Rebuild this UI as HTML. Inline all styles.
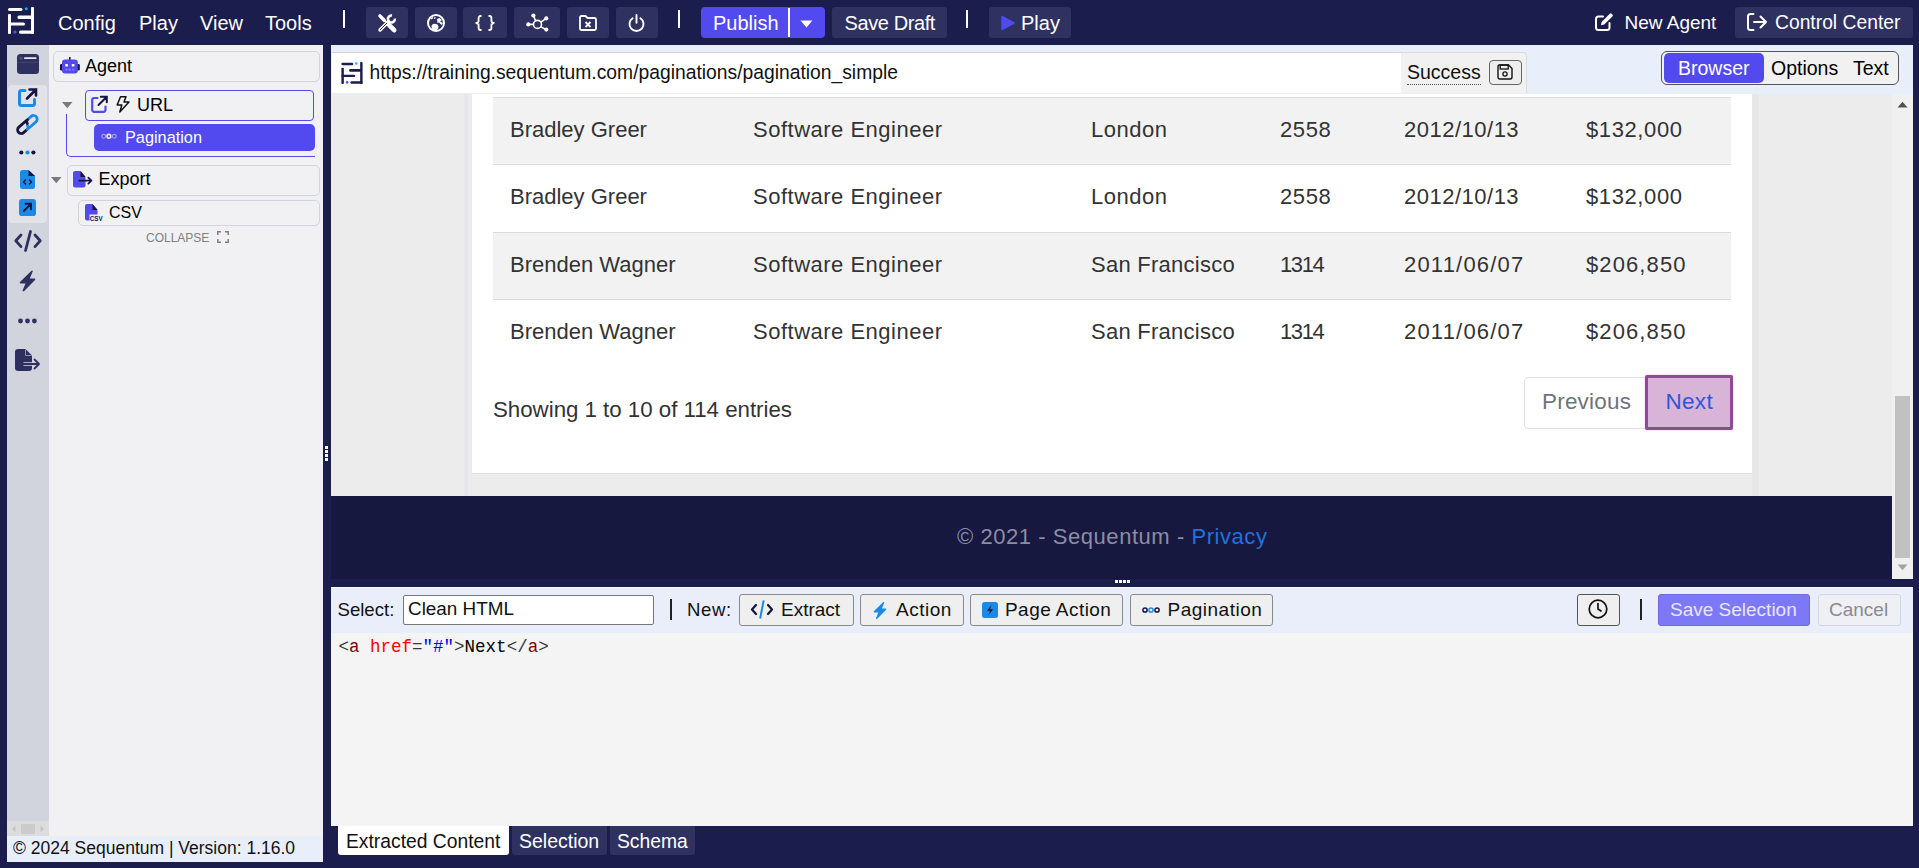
<!DOCTYPE html>
<html><head><meta charset="utf-8">
<style>
*{box-sizing:border-box;margin:0;padding:0}
html,body{width:1919px;height:868px;overflow:hidden}
body{background:#1b1d4c;font-family:"Liberation Sans",sans-serif;position:relative;color:#000}
.a{position:absolute}
.t{position:absolute;line-height:1;white-space:nowrap}
.w{color:#fff}
.tb{position:absolute;background:#2f3260;border-radius:3px;top:7px;height:31px}
.sep{position:absolute;background:#fff;width:2px;top:10px;height:18px}
svg{position:absolute;overflow:visible}
</style></head><body>

<!-- ===== TOP BAR ===== -->
<svg style="left:8px;top:7px" width="26" height="27" viewBox="0 0 26 27">
 <g fill="#fff">
  <rect x="0" y="1" width="14.5" height="3" rx="1.5"/>
  <rect x="23" y="0" width="3" height="27" rx="1"/>
  <rect x="0" y="7" width="3" height="20" rx="1"/>
  <rect x="9.5" y="8.5" width="15" height="3.5" rx="1.5"/>
  <rect x="0" y="15.5" width="17" height="3" rx="1.5"/>
  <rect x="11" y="23.5" width="15" height="3.3" rx="1.5"/>
 </g>
 <circle cx="18.3" cy="1.8" r="1.5" fill="#1ea7fd"/>
 <circle cx="7" cy="25" r="1.6" fill="#5b50ff"/>
</svg>
<div class="t w" style="left:58px;top:13px;font-size:20px">Config</div>
<div class="t w" style="left:139px;top:13px;font-size:20px">Play</div>
<div class="t w" style="left:200px;top:13px;font-size:20px">View</div>
<div class="t w" style="left:265px;top:13px;font-size:20px">Tools</div>
<div class="sep" style="left:343px"></div>

<div class="tb" style="left:366px;width:42px"></div>
<div class="tb" style="left:415px;width:42px"></div>
<div class="tb" style="left:463px;width:44px"></div>
<div class="tb" style="left:514px;width:46px"></div>
<div class="tb" style="left:567px;width:42px"></div>
<div class="tb" style="left:616px;width:42px"></div>

<div class="sep" style="left:678px"></div>

<div class="a" style="left:701px;top:7px;width:124px;height:31px;background:#5249ef;border-radius:4px"></div>
<div class="a" style="left:788px;top:8px;width:1.5px;height:29px;background:#fff"></div>
<div class="t w" style="left:713px;top:13px;font-size:20px">Publish</div>
<svg style="left:800px;top:19.5px" width="13" height="8" viewBox="0 0 13 8"><path d="M0.5 0.5 H12.5 L6.5 7.5 Z" fill="#fff"/></svg>

<div class="tb" style="left:832px;width:115px"></div>
<div class="t w" style="left:844.5px;top:13px;font-size:20px;letter-spacing:-0.4px">Save Draft</div>
<div class="sep" style="left:966px"></div>
<div class="tb" style="left:989px;width:82px"></div>
<svg style="left:1001px;top:14.5px" width="14" height="16" viewBox="0 0 14 16"><path d="M1 1.5 L13 8 L1 14.5 Z" fill="#5249ef" stroke="#5249ef" stroke-linejoin="round" stroke-width="1.5"/></svg>
<div class="t w" style="left:1021px;top:13px;font-size:20px">Play</div>


<div class="tb" style="left:1735px;width:178px"></div>
<!-- toolbar icons -->
<svg style="left:378px;top:14px" width="19" height="18" viewBox="0 0 19 18">
 <g stroke="#fff" fill="none" stroke-linecap="round">
  <path d="M1.9 1.9 L6.2 6.2" stroke-width="3.4"/>
  <path d="M6 6 L10 10" stroke-width="1.6"/>
  <path d="M11.2 11.2 L16.2 16.2" stroke-width="4.6"/>
  <path d="M2 16 L10.5 7.5" stroke-width="3.4"/>
  <path d="M16.9 4.7 A3.5 3.5 0 1 1 14 1.5" stroke-width="2.6" stroke-linecap="butt"/>
 </g>
 <path d="M2.2 15.8 L8.8 9.2" stroke="#2f3260" stroke-width="1" stroke-linecap="round"/>
</svg>
<svg style="left:427px;top:14px" width="18" height="18" viewBox="0 0 18 18">
 <circle cx="9" cy="9" r="8" fill="none" stroke="#fff" stroke-width="2"/>
 <path d="M4.5 12.5 C4.5 9.5 8 9 10.5 10.5 C12.5 12 11 16 9 16.5 C6.5 16.5 4.5 15 4.5 12.5 Z" fill="#fff"/>
 <path d="M10 5 L12.5 4 L15 6 L13 7.5 L16 9 L14.5 11 L12 8.5 L10.5 9 Z" fill="#fff"/>
 <path d="M4 5 L6 3.5 M7 4.5 L8.5 3.5" stroke="#fff" stroke-width="1.2"/>
</svg>
<svg style="left:475px;top:15px" width="20" height="16" viewBox="0 0 20 16">
 <path d="M6.5 1 H5.5 Q3.6 1 3.6 3 V5.8 Q3.6 7.8 1.2 8 Q3.6 8.2 3.6 10.2 V13 Q3.6 15 5.5 15 H6.5" fill="none" stroke="#fff" stroke-width="1.8" stroke-linejoin="round"/>
 <path d="M13.5 1 H14.5 Q16.4 1 16.4 3 V5.8 Q16.4 7.8 18.8 8 Q16.4 8.2 16.4 10.2 V13 Q16.4 15 14.5 15 H13.5" fill="none" stroke="#fff" stroke-width="1.8" stroke-linejoin="round"/>
</svg>
<svg style="left:526px;top:13px" width="22" height="20" viewBox="0 0 22 20">
 <g stroke="#fff" stroke-width="1.6" fill="none">
  <circle cx="11.5" cy="11.4" r="4"/>
  <path d="M7.5 11.4 H3 M9.6 7.8 L7.4 2.5 M14.8 9.2 L20.3 5.3 M14.6 13.8 L20.3 16.6"/>
 </g>
 <g fill="#fff"><circle cx="2.3" cy="11.4" r="2.1"/><circle cx="7.4" cy="2.5" r="2.1"/><circle cx="20.3" cy="5.3" r="2.1"/><circle cx="20.3" cy="16.6" r="2.1"/></g>
</svg>
<svg style="left:579px;top:15px" width="18" height="16" viewBox="0 0 18 16">
 <path d="M2.5 1 H6.5 L8.5 3 H15.5 Q17 3 17 4.5 V13.5 Q17 15 15.5 15 H2.5 Q1 15 1 13.5 V2.5 Q1 1 2.5 1 Z" fill="none" stroke="#fff" stroke-width="1.8" stroke-linejoin="round"/>
 <path d="M6.5 7 L11.5 12 M11.5 7 L6.5 12" stroke="#fff" stroke-width="1.8"/>
</svg>
<svg style="left:628px;top:13.5px" width="17" height="18" viewBox="0 0 17 18">
 <path d="M4.6 4.2 A7 7 0 1 0 12.4 4.2" fill="none" stroke="#fff" stroke-width="1.9" stroke-linecap="round"/>
 <path d="M8.5 1 V8.8" stroke="#fff" stroke-width="1.9" stroke-linecap="round"/>
</svg>
<!-- new agent -->
<svg style="left:1595px;top:12px" width="19" height="19" viewBox="0 0 19 19">
 <path d="M8 4.5 H3.5 Q1 4.5 1 7 V15.5 Q1 18 3.5 18 H12 Q14.5 18 14.5 15.5 V11" fill="none" stroke="#fff" stroke-width="2" stroke-linecap="round"/>
 <path d="M6 13.2 L6.6 10 L14.8 1.8 Q15.8 0.8 16.8 1.8 L17.4 2.4 Q18.4 3.4 17.4 4.4 L9.2 12.6 Z" fill="#fff"/>
</svg>
<svg style="left:1747px;top:13px" width="21" height="18" viewBox="0 0 21 18">
 <path d="M6.5 1 H3.5 Q1 1 1 3.5 V14.5 Q1 17 3.5 17 H6.5" fill="none" stroke="#fff" stroke-width="2" stroke-linecap="round"/>
 <path d="M7 9 H19 M13.5 3.5 L19 9 L13.5 14.5" fill="none" stroke="#fff" stroke-width="2" stroke-linecap="round" stroke-linejoin="round"/>
</svg>

<div class="t w" style="left:1624.5px;top:13px;font-size:19px">New Agent</div>
<div class="t w" style="left:1775px;top:13px;font-size:19.3px">Control Center</div>

<!-- ===== LEFT PANEL ===== -->
<div class="a" style="left:7px;top:45px;width:42px;height:776px;background:#d1d3dd"></div>
<div class="a" style="left:8px;top:85px;width:39px;height:138px;background:#e2e3e9;border-radius:4px"></div>
<div class="a" style="left:7px;top:821px;width:42px;height:15px;background:#dcdcdc"></div>
<div class="a" style="left:21px;top:824px;width:14px;height:10px;background:#cbcbcb"></div>
<svg style="left:11px;top:825px" width="5" height="8" viewBox="0 0 5 8"><path d="M4.5 0.5 V7.5 L0.8 4 Z" fill="#c4c4c4"/></svg>
<svg style="left:40px;top:825px" width="5" height="8" viewBox="0 0 5 8"><path d="M0.5 0.5 V7.5 L4.2 4 Z" fill="#c4c4c4"/></svg>
<div class="a" style="left:49px;top:45px;width:274px;height:791px;background:#f1f1f4"></div>
<div class="a" style="left:7px;top:836px;width:316px;height:26px;background:#e9effa"></div>
<div class="t" style="left:13px;top:839.5px;font-size:17.5px;color:#111">© 2024 Sequentum | Version: 1.16.0</div>

<!-- tree -->
<div class="a" style="left:53px;top:51px;width:266.5px;height:30.5px;border:1px solid #d3d5de;border-radius:5px"></div>
<div class="t" style="left:85px;top:57px;font-size:18px">Agent</div>
<div class="a" style="left:84.5px;top:90px;width:229.5px;height:30.5px;border:1.5px solid #5249ef;border-radius:4px"></div>
<div class="t" style="left:137px;top:95.5px;font-size:18px">URL</div>
<div class="a" style="left:66px;top:114px;width:249px;height:42.5px;border-left:1.5px solid #5249ef;border-bottom:1.5px solid #5249ef;border-bottom-left-radius:5px"></div>
<div class="a" style="left:94px;top:124px;width:221px;height:27px;background:#5249ef;border-radius:5px"></div>
<div class="t w" style="left:125px;top:129px;font-size:16.3px">Pagination</div>
<div class="a" style="left:66.5px;top:164.5px;width:253px;height:31px;border:1px solid #d3d5de;border-radius:5px"></div>
<div class="t" style="left:98.5px;top:169.5px;font-size:18px">Export</div>
<div class="a" style="left:77.5px;top:200px;width:242px;height:25.5px;border:1px solid #d3d5de;border-radius:5px"></div>
<div class="t" style="left:109px;top:204.5px;font-size:16px">CSV</div>
<div class="t" style="left:146px;top:231.5px;font-size:12px;color:#808080">COLLAPSE</div>


<!-- sidebar icons -->
<svg style="left:17px;top:54px" width="22" height="20" viewBox="0 0 22 20">
 <rect x="0" y="0" width="22" height="20" rx="3.5" fill="#2e3160"/>
 <path d="M0.5 8.3 H21.5" stroke="#4a4d78" stroke-width="0.8"/>
 <rect x="7" y="3.3" width="12.5" height="1.8" rx="0.9" fill="#e6e7ee"/>
 <circle cx="4" cy="4.2" r="1.2" fill="none" stroke="#6b6e90" stroke-width="0.6"/>
</svg>
<svg style="left:17px;top:88px" width="21" height="20" viewBox="0 0 21 20">
 <path d="M8 2.5 H4.5 Q2.5 2.5 2.5 4.5 V15.5 Q2.5 17.5 4.5 17.5 H15.5 Q17.5 17.5 17.5 15.5 V11.5" fill="none" stroke="#1b8ae6" stroke-width="3" stroke-linecap="round"/>
 <path d="M10 10.5 L19 1.5 M12.5 1.5 H19 V7.5" fill="none" stroke="#15153f" stroke-width="2.6" stroke-linecap="round" stroke-linejoin="miter"/>
</svg>
<svg style="left:16px;top:115px" width="23" height="19" viewBox="0 0 23 19">
 <g transform="translate(11.4,9.5) rotate(-41)" fill="none" stroke-width="2.8" stroke-linecap="round">
  <path d="M1.5 -3.6 H-8.2 A3.6 3.6 0 0 0 -8.2 3.6 H-3.5" stroke="#15153f"/>
  <path d="M-1.5 3.6 H8.2 A3.6 3.6 0 0 0 8.2 -3.6 H3.5" stroke="#1b8ae6"/>
  <path d="M-3.2 3.6 Q-1 3.6 -0.6 0.8" stroke="#1b8ae6"/>
  <path d="M3.2 -3.6 Q1 -3.6 0.6 -0.8" stroke="#15153f"/>
 </g>
</svg>
<svg style="left:19px;top:150px" width="17" height="5" viewBox="0 0 17 5">
 <circle cx="2.3" cy="2.5" r="2.1" fill="#15153f"/><circle cx="8.5" cy="2.5" r="2.1" fill="#1b8ae6"/><circle cx="14.4" cy="2.5" r="2.1" fill="#15153f"/>
</svg>
<svg style="left:20px;top:170px" width="15" height="19" viewBox="0 0 15 19">
 <path d="M2.5 0 H8.5 L15 6 V16.5 Q15 19 12.5 19 H2.5 Q0 19 0 16.5 V2.5 Q0 0 2.5 0 Z" fill="#1b8ae6"/>
 <path d="M8.5 0 L15 6 H8.5 Z" fill="#15153f"/>
 <path d="M5.5 10 L3.5 12 L5.5 14 M9.5 10 L11.5 12 L9.5 14" fill="none" stroke="#15153f" stroke-width="1.5" stroke-linecap="round" stroke-linejoin="round"/>
</svg>
<svg style="left:19px;top:199px" width="17" height="17" viewBox="0 0 17 17">
 <rect x="0" y="0" width="17" height="17" rx="2.8" fill="#1b8ae6"/>
 <path d="M4.8 12 L12 4.8 M6.5 4.8 H12 V10.3" fill="none" stroke="#15153f" stroke-width="1.9" stroke-linecap="round"/>
</svg>
<svg style="left:14px;top:230px" width="28" height="22" viewBox="0 0 28 22">
 <path d="M7 5 L1.8 10.8 L7 16.6 M21 5 L26.2 10.8 L21 16.6 M16.5 1.5 L11.5 20.5" fill="none" stroke="#2e3160" stroke-width="2.8" stroke-linecap="round" stroke-linejoin="round"/>
</svg>
<svg style="left:19px;top:270px" width="17" height="22" viewBox="0 0 17 22">
 <path d="M12.5 0.8 Q13.5 0.2 13.8 1.2 L10.8 8.5 H15.5 Q17 8.7 16 10 L5.2 21 Q4 21.8 3.5 20.8 L6.5 13.5 H1.5 Q0 13.2 1 12 Z" fill="#2e3160"/>
</svg>
<svg style="left:18px;top:318px" width="19" height="6" viewBox="0 0 19 6">
 <circle cx="2.5" cy="3" r="2.4" fill="#2e3160"/><circle cx="9.5" cy="3" r="2.4" fill="#2e3160"/><circle cx="16.4" cy="3" r="2.4" fill="#2e3160"/>
</svg>
<svg style="left:15px;top:349px" width="26" height="22" viewBox="0 0 26 22">
 <path d="M3 0 H10.5 L17 6.5 V19 Q17 22 14 22 H3 Q0 22 0 19 V3 Q0 0 3 0 Z" fill="#2e3160"/>
 <path d="M10.5 0.5 V6.5 H16.5" fill="none" stroke="#d1d3dd" stroke-width="0.6"/>
 <path d="M8.5 15 H23.5" stroke="#d1d3dd" stroke-width="3.6"/>
 <path d="M8.5 15 H23.5 M19.5 10.5 L24 15 L19.5 19.5" fill="none" stroke="#2e3160" stroke-width="1.8" stroke-linecap="round" stroke-linejoin="round"/>
</svg>

<!-- tree icons -->
<svg style="left:60px;top:57px" width="20" height="17" viewBox="0 0 20 17">
 <rect x="9" y="0" width="1.6" height="3" fill="#15153f"/>
 <rect x="0" y="7" width="3" height="6.5" rx="1.3" fill="#15153f"/>
 <rect x="16.8" y="7" width="3" height="6.5" rx="1.3" fill="#15153f"/>
 <rect x="2" y="2.5" width="15.8" height="14" rx="3" fill="#5249ef"/>
 <rect x="5.3" y="7" width="2.6" height="2.6" rx="0.6" fill="#fff"/>
 <rect x="11.8" y="7" width="2.6" height="2.6" rx="0.6" fill="#fff"/>
 <rect x="5.5" y="11.8" width="2" height="1.8" fill="#8a84f3"/><rect x="8.9" y="11.8" width="2" height="1.8" fill="#8a84f3"/><rect x="12.3" y="11.8" width="2" height="1.8" fill="#8a84f3"/>
</svg>
<svg style="left:62px;top:102px" width="11" height="7" viewBox="0 0 11 7"><path d="M0 0 H10.5 L5.25 6.3 Z" fill="#7a7a7a"/></svg>
<svg style="left:91px;top:96px" width="17" height="17" viewBox="0 0 17 17">
 <path d="M6.5 2 H3.2 Q1.2 2 1.2 4 V13.8 Q1.2 15.8 3.2 15.8 H12.5 Q14.5 15.8 14.5 13.8 V10.5" fill="none" stroke="#5249ef" stroke-width="2.2" stroke-linecap="round"/>
 <path d="M7.5 9 L15.8 0.8 M9.8 0.8 H15.8 V6.2" fill="none" stroke="#15153f" stroke-width="2" stroke-linecap="round"/>
</svg>
<svg style="left:116px;top:96px" width="14" height="17" viewBox="0 0 14 17">
 <path d="M4.5 0.8 H10 L8 6 H13 L3.8 16 L5.8 9 H1.2 Z" fill="none" stroke="#111" stroke-width="1.5" stroke-linejoin="round"/>
</svg>
<svg style="left:101px;top:133px" width="16" height="7" viewBox="0 0 16 7">
 <circle cx="2.7" cy="3.3" r="1.9" fill="none" stroke="#a9a4f7" stroke-width="1.1"/>
 <circle cx="7.9" cy="3.3" r="1.9" fill="none" stroke="#e8e6ff" stroke-width="1.6"/>
 <circle cx="13.3" cy="3.3" r="1.9" fill="none" stroke="#a9a4f7" stroke-width="1.1"/>
</svg>
<svg style="left:51px;top:177px" width="11" height="7" viewBox="0 0 11 7"><path d="M0 0 H10.5 L5.25 6.3 Z" fill="#7a7a7a"/></svg>
<svg style="left:73px;top:171px" width="20" height="17" viewBox="0 0 20 17">
 <path d="M2 0 H7.5 L12.5 6 V14.5 Q12.5 16.5 10.5 16.5 H2 Q0 16.5 0 14.5 V2 Q0 0 2 0 Z" fill="#5249ef"/>
 <path d="M7.5 0 L12.5 6 H7.5 Z" fill="#15153f"/>
 <path d="M6.5 9.6 H18.5 M15.3 6.6 L18.5 9.6 L15.3 12.6" fill="none" stroke="#15153f" stroke-width="1.7" stroke-linecap="round" stroke-linejoin="round"/>
</svg>
<svg style="left:85px;top:204px" width="18" height="17" viewBox="0 0 18 17">
 <path d="M2 0 H7.5 L12.5 6 V14.5 Q12.5 16.5 10.5 16.5 H2 Q0 16.5 0 14.5 V2 Q0 0 2 0 Z" fill="#5249ef"/>
 <path d="M7.5 0 L12.5 6 H7.5 Z" fill="#15153f"/>
 <rect x="4.5" y="10.5" width="13.5" height="6.5" fill="#f1f1f4"/>
 <text x="4.8" y="16.6" font-family="Liberation Sans" font-weight="bold" font-size="7.2" fill="#15153f" textLength="12.8" lengthAdjust="spacingAndGlyphs">CSV</text>
</svg>
<svg style="left:217px;top:231px" width="12" height="12" viewBox="0 0 12 12">
 <path d="M0.8 4 V0.8 H4 M8 0.8 H11.2 V4 M11.2 8 V11.2 H8 M4 11.2 H0.8 V8" fill="none" stroke="#808080" stroke-width="1.5"/>
</svg>

<!-- ===== BROWSER PANEL ===== -->
<div class="a" style="left:331px;top:45px;width:1582px;height:49px;background:#e8eefa"></div>
<div class="a" style="left:332px;top:52px;width:1069px;height:41px;background:#fff;border-top:1px solid #cfd3da"></div>
<div class="a" style="left:1401px;top:52px;width:126px;height:41px;background:#f1f1f1;border-top:1px solid #dcdcdc;border-right:1px solid #dcdcdc;border-top-right-radius:4px"></div>
<div class="t" style="left:369.5px;top:63px;font-size:19.3px;color:#111">https://training.sequentum.com/paginations/pagination_simple</div>
<div class="t" style="left:1407px;top:62.5px;font-size:19.5px;color:#111">Success</div>
<div class="a" style="left:1407px;top:84px;width:74px;border-top:1px dotted #555"></div>
<div class="a" style="left:1489px;top:60px;width:33px;height:25px;border:1px solid #666;border-radius:4px;background:#eee"></div>


<svg style="left:341px;top:62px" width="22" height="22" viewBox="0 0 26 27">
 <g fill="#1b1d4c">
  <rect x="0" y="1" width="14.5" height="3" rx="1.5"/>
  <rect x="23" y="0" width="3" height="27" rx="1"/>
  <rect x="0" y="7" width="3" height="20" rx="1"/>
  <rect x="9.5" y="8.5" width="15" height="3.5" rx="1.5"/>
  <rect x="0" y="15.5" width="17" height="3" rx="1.5"/>
  <rect x="11" y="23.5" width="15" height="3.3" rx="1.5"/>
 </g>
 <circle cx="18.3" cy="1.8" r="1.5" fill="#1ea7fd"/>
 <circle cx="7" cy="25" r="1.6" fill="#5b50ff"/>
</svg>
<svg style="left:1497px;top:64px" width="16" height="16" viewBox="0 0 16 16">
 <path d="M2.3 1 H11.5 L15 4.5 V13 Q15 15 13 15 H3 Q1 15 1 13 V3 Q1 1 2.3 1 Z" fill="none" stroke="#111" stroke-width="1.4"/>
 <rect x="3.2" y="1" width="8" height="4" fill="none" stroke="#111" stroke-width="1.3"/>
 <circle cx="8" cy="10" r="2.1" fill="none" stroke="#111" stroke-width="1.3"/>
</svg>

<div class="a" style="left:1661px;top:51px;width:238px;height:34px;border:1px solid #555;border-radius:6px;background:#f1f1f1"></div>
<div class="a" style="left:1664px;top:53px;width:100px;height:30px;background:#5249ef;border-radius:5px"></div>
<div class="t w" style="left:1678px;top:58.5px;font-size:19.5px">Browser</div>
<div class="t" style="left:1771px;top:58.5px;font-size:19.5px">Options</div>
<div class="t" style="left:1853px;top:58.5px;font-size:19.5px">Text</div>

<!-- content -->
<div class="a" style="left:331px;top:94px;width:1561px;height:402px;background:#ececec"></div>
<div class="a" style="left:472px;top:94px;width:1280px;height:380px;background:#fff;border-bottom:1px solid #dedede"></div>
<div class="a" style="left:493px;top:96.5px;width:1238px;height:68.5px;background:#f2f2f2;border-top:1px solid #dcdcdc;border-bottom:1px solid #dcdcdc"></div>
<div class="a" style="left:493px;top:232px;width:1238px;height:68px;background:#f2f2f2;border-top:1px solid #dcdcdc;border-bottom:1px solid #dcdcdc"></div>

<div class="t" style="left:510px;top:119.0px;font-size:22px;color:#333">Bradley Greer</div>
<div class="t" style="left:753px;top:119.0px;font-size:22px;color:#333;letter-spacing:0.5px">Software Engineer</div>
<div class="t" style="left:1091px;top:119.0px;font-size:22px;color:#333;letter-spacing:0.5px">London</div>
<div class="t" style="left:1280px;top:119.0px;font-size:22px;color:#333;letter-spacing:0.6px">2558</div>
<div class="t" style="left:1404px;top:119.0px;font-size:22px;color:#333;letter-spacing:0.5px">2012/10/13</div>
<div class="t" style="left:1586px;top:119.0px;font-size:22px;color:#333;letter-spacing:0.6px">$132,000</div>
<div class="t" style="left:510px;top:186.4px;font-size:22px;color:#333">Bradley Greer</div>
<div class="t" style="left:753px;top:186.4px;font-size:22px;color:#333;letter-spacing:0.5px">Software Engineer</div>
<div class="t" style="left:1091px;top:186.4px;font-size:22px;color:#333;letter-spacing:0.5px">London</div>
<div class="t" style="left:1280px;top:186.4px;font-size:22px;color:#333;letter-spacing:0.6px">2558</div>
<div class="t" style="left:1404px;top:186.4px;font-size:22px;color:#333;letter-spacing:0.5px">2012/10/13</div>
<div class="t" style="left:1586px;top:186.4px;font-size:22px;color:#333;letter-spacing:0.6px">$132,000</div>
<div class="t" style="left:510px;top:254.0px;font-size:22px;color:#333">Brenden Wagner</div>
<div class="t" style="left:753px;top:254.0px;font-size:22px;color:#333;letter-spacing:0.5px">Software Engineer</div>
<div class="t" style="left:1091px;top:254.0px;font-size:22px;color:#333;letter-spacing:0.25px">San Francisco</div>
<div class="t" style="left:1280px;top:254.0px;font-size:22px;color:#333;letter-spacing:-1.4px">1314</div>
<div class="t" style="left:1404px;top:254.0px;font-size:22px;color:#333;letter-spacing:1.2px">2011/06/07</div>
<div class="t" style="left:1586px;top:254.0px;font-size:22px;color:#333;letter-spacing:1.1px">$206,850</div>
<div class="t" style="left:510px;top:321.4px;font-size:22px;color:#333">Brenden Wagner</div>
<div class="t" style="left:753px;top:321.4px;font-size:22px;color:#333;letter-spacing:0.5px">Software Engineer</div>
<div class="t" style="left:1091px;top:321.4px;font-size:22px;color:#333;letter-spacing:0.25px">San Francisco</div>
<div class="t" style="left:1280px;top:321.4px;font-size:22px;color:#333;letter-spacing:-1.4px">1314</div>
<div class="t" style="left:1404px;top:321.4px;font-size:22px;color:#333;letter-spacing:1.2px">2011/06/07</div>
<div class="t" style="left:1586px;top:321.4px;font-size:22px;color:#333;letter-spacing:1.1px">$206,850</div>

<div class="t" style="left:493px;top:398.5px;font-size:22.3px;color:#333;letter-spacing:-0.02px">Showing 1 to 10 of 114 entries</div>
<div class="a" style="left:1524px;top:377px;width:122px;height:52px;border:1px solid #dee2e6;border-radius:4px 0 0 4px;background:#fff"></div>
<div class="t" style="left:1542px;top:391px;font-size:22.5px;color:#6c757d;letter-spacing:0.2px">Previous</div>
<div class="a" style="left:1645px;top:374.5px;width:87.5px;height:55.5px;border:3px solid #8d4b91;background:#d9b4d9;border-radius:2px;box-shadow:0 0 1.5px #c9a0cc"></div>
<div class="t" style="left:1665.5px;top:391px;font-size:22.5px;color:#2f56d6;letter-spacing:0.3px">Next</div>

<div class="a" style="left:331px;top:496px;width:1561px;height:83px;background:#171840"></div>
<div class="t" style="left:957px;top:525.5px;font-size:22px;letter-spacing:0.55px;color:#8c8ca3">© 2021 - Sequentum - <span style="color:#2371da">Privacy</span></div>

<div class="a" style="left:1892px;top:94px;width:21px;height:485px;background:#f0f0f0"></div>
<div class="a" style="left:1895px;top:396px;width:15px;height:162px;background:#c1c1c1"></div>


<!-- handles / scroll arrows / bands -->
<div class="a" style="left:1752px;top:94px;width:7px;height:402px;background:#e7e7e7"></div>
<div class="a" style="left:464px;top:94px;width:4px;height:402px;background:#e6e6e8"></div>
<svg style="left:1897px;top:101px" width="11" height="7" viewBox="0 0 11 7"><path d="M0.5 6.5 H10.5 L5.5 0.8 Z" fill="#505050"/></svg>
<svg style="left:1897px;top:564px" width="11" height="7" viewBox="0 0 11 7"><path d="M0.5 0.5 H10.5 L5.5 6.2 Z" fill="#a3a3a3"/></svg>
<div class="a" style="left:1115px;top:580px;width:3px;height:3px;background:#fff"></div>
<div class="a" style="left:1119px;top:580px;width:3px;height:3px;background:#fff"></div>
<div class="a" style="left:1123px;top:580px;width:3px;height:3px;background:#fff"></div>
<div class="a" style="left:1127px;top:580px;width:3px;height:3px;background:#fff"></div>
<div class="a" style="left:325px;top:446px;width:3px;height:3px;background:#fff"></div>
<div class="a" style="left:325px;top:450px;width:3px;height:3px;background:#fff"></div>
<div class="a" style="left:325px;top:454px;width:3px;height:3px;background:#fff"></div>
<div class="a" style="left:325px;top:458px;width:3px;height:3px;background:#fff"></div>

<!-- ===== BOTTOM PANEL ===== -->
<div class="a" style="left:331px;top:587px;width:1582px;height:46px;background:#e9eefa;border-top:1px solid #f8faff"></div>
<div class="a" style="left:331px;top:633px;width:1582px;height:193px;background:#f4f4f4"></div>
<div class="t" style="left:337.5px;top:600.5px;font-size:18.6px;color:#111">Select:</div>
<div class="a" style="left:403px;top:595px;width:251px;height:30px;border:1px solid #767676;border-radius:2px;background:#fff"></div>
<div class="t" style="left:408px;top:600px;font-size:18.9px;color:#111">Clean HTML</div>
<div class="a" style="left:669.5px;top:599px;width:2px;height:21px;background:#222"></div>
<div class="t" style="left:687px;top:600.5px;font-size:18.6px;color:#111;letter-spacing:0.6px">New:</div>

<div class="a" style="left:739px;top:594px;width:115px;height:31.5px;border:1px solid #8a8a8a;border-radius:3px;background:#efefef"></div>
<div class="t" style="left:781px;top:600px;font-size:19px;color:#111">Extract</div>
<div class="a" style="left:860px;top:594px;width:103.5px;height:31.5px;border:1px solid #8a8a8a;border-radius:3px;background:#efefef"></div>
<div class="t" style="left:896px;top:600px;font-size:19px;color:#111;letter-spacing:0.5px">Action</div>
<div class="a" style="left:970px;top:594px;width:152.5px;height:31.5px;border:1px solid #8a8a8a;border-radius:3px;background:#efefef"></div>
<div class="t" style="left:1005px;top:600px;font-size:19px;color:#111;letter-spacing:0.45px">Page Action</div>
<div class="a" style="left:1130px;top:594px;width:143px;height:31.5px;border:1px solid #8a8a8a;border-radius:3px;background:#efefef"></div>
<div class="t" style="left:1167.5px;top:600px;font-size:19px;color:#111;letter-spacing:0.5px">Pagination</div>

<div class="a" style="left:1576.5px;top:594px;width:43.5px;height:31.5px;border:1px solid #555;border-radius:3px;background:#efefef"></div>
<div class="a" style="left:1640px;top:599px;width:2px;height:21px;background:#222"></div>
<div class="a" style="left:1657.5px;top:594px;width:152.5px;height:31.5px;border-radius:3px;background:#7d78f6;border:1px solid #6f6bd6"></div>
<div class="t" style="left:1670px;top:600px;font-size:19px;color:#e8e6ff">Save Selection</div>
<div class="a" style="left:1817.5px;top:594px;width:83.5px;height:31.5px;border:1px solid #d5d8e0;border-radius:3px;background:#eef0f6"></div>
<div class="t" style="left:1829px;top:600px;font-size:19px;color:#8a8a8a">Cancel</div>


<svg style="left:750px;top:600px" width="24" height="19" viewBox="0 0 24 19">
 <path d="M6 5 L2 9.5 L6 14 M18 5 L22 9.5 L18 14" fill="none" stroke="#15153f" stroke-width="2.2" stroke-linecap="round" stroke-linejoin="round"/>
 <path d="M13.5 1.2 L10.3 17.8" stroke="#1b8ae6" stroke-width="2" stroke-linecap="round"/>
</svg>
<svg style="left:873px;top:600.5px" width="14" height="19" viewBox="0 0 17 22">
 <path d="M12.5 0.8 Q13.5 0.2 13.8 1.2 L10.8 8.5 H15.5 Q17 8.7 16 10 L5.2 21 Q4 21.8 3.5 20.8 L6.5 13.5 H1.5 Q0 13.2 1 12 Z" fill="#1b8ae6"/>
</svg>
<svg style="left:982px;top:602px" width="16" height="16" viewBox="0 0 16 16">
 <rect width="16" height="16" rx="2.5" fill="#1b8ae6"/>
 <path d="M9.5 3 L5 8.8 H8 L6.5 13 L11 7.2 H8 Z" fill="#15153f"/>
</svg>
<svg style="left:1142px;top:606px" width="18" height="8" viewBox="0 0 18 8">
 <circle cx="3" cy="4" r="2.1" fill="none" stroke="#15153f" stroke-width="1.5"/>
 <circle cx="9" cy="4" r="2.1" fill="none" stroke="#1b8ae6" stroke-width="1.5"/>
 <circle cx="15" cy="4" r="2.1" fill="none" stroke="#15153f" stroke-width="1.5"/>
</svg>
<svg style="left:1588px;top:599px" width="20" height="20" viewBox="0 0 20 20">
 <circle cx="10" cy="10" r="8.8" fill="none" stroke="#111" stroke-width="1.7"/>
 <path d="M10 4.5 V10 L13 12" fill="none" stroke="#111" stroke-width="1.7" stroke-linecap="round"/>
</svg>

<div class="t" style="left:338.5px;top:639px;font-size:17.5px;font-family:'Liberation Mono',monospace;color:#3a3a3a"><span>&lt;</span><span style="color:#800000">a</span> <span style="color:#f00">href</span>=<span style="color:#00f">"#"</span>&gt;<span style="color:#000">Next</span>&lt;/<span style="color:#800000">a</span>&gt;</div>

<!-- tabs -->
<div class="a" style="left:338px;top:826px;width:171px;height:29px;background:#fff;border-radius:0 0 3px 3px"></div>
<div class="t" style="left:346px;top:832px;font-size:19.3px;color:#111">Extracted Content</div>
<div class="a" style="left:512px;top:826px;width:94.5px;height:29px;background:#2f3260;border-radius:0 0 3px 3px"></div>
<div class="t w" style="left:519px;top:832px;font-size:19.5px">Selection</div>
<div class="a" style="left:609.5px;top:826px;width:85px;height:29px;background:#2f3260;border-radius:0 0 3px 3px"></div>
<div class="t w" style="left:617px;top:832px;font-size:19.3px">Schema</div>

</body></html>
